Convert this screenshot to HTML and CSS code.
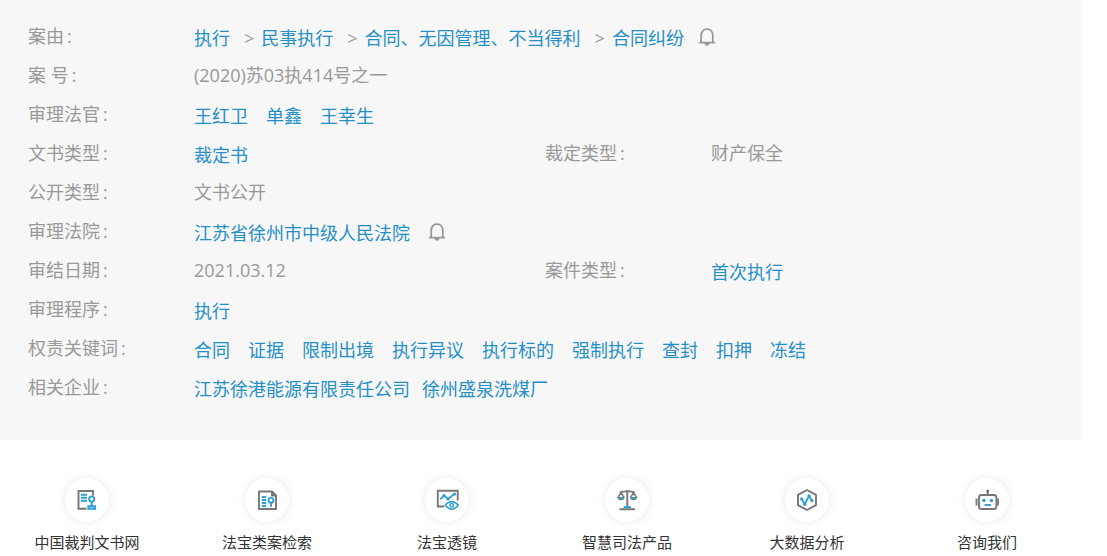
FILE: index.html
```html
<!DOCTYPE html>
<html lang="zh-CN">
<head>
<meta charset="utf-8">
<meta name="viewport" content="width=device-width, initial-scale=1">
<title>(2020)苏03执414号之一</title>
<link rel="stylesheet" href="styles.css">
</head>
<body>
<svg class="defs" aria-hidden="true">
  <symbol id="bell" viewBox="0 0 18 18">
    <path d="M3.200 14V7.600C3.200 3.700 5.600 1.200 9 1.200S14.800 3.700 14.800 7.600V14" fill="none" stroke="#999" stroke-width="1.800"/>
    <path d="M0.300 15.600L3 12.300L4.100 13.800H13.900L15 12.300L17.700 15.600H11.800Q11 17.800 9 17.800T6.200 15.600Z" fill="#999"/>
  </symbol>
</svg>
<main>
  <dl class="info">
    <div class="row"><div class="pair"><dt>案由<span class="colon">:</span></dt><dd class="crumbs"><a href="#">执行</a><span class="sep">&gt;</span><a href="#">民事执行</a><span class="sep">&gt;</span><a href="#">合同、无因管理、不当得利</a><span class="sep">&gt;</span><a href="#">合同纠纷</a><button class="bell" type="button" aria-label="订阅案由"><svg><use href="#bell"/></svg></button></dd></div></div>
    <div class="row"><div class="pair"><dt>案 号<span class="colon">:</span></dt><dd>(2020)苏03执414号之一</dd></div></div>
    <div class="row"><div class="pair"><dt>审理法官<span class="colon">:</span></dt><dd class="links"><a href="#">王红卫</a><a href="#">单鑫</a><a href="#">王幸生</a></dd></div></div>
    <div class="row"><div class="pair"><dt>文书类型<span class="colon">:</span></dt><dd class="links"><a href="#">裁定书</a></dd></div><div class="pair"><dt>裁定类型<span class="colon">:</span></dt><dd>财产保全</dd></div></div>
    <div class="row"><div class="pair"><dt>公开类型<span class="colon">:</span></dt><dd>文书公开</dd></div></div>
    <div class="row"><div class="pair"><dt>审理法院<span class="colon">:</span></dt><dd class="links"><a href="#">江苏省徐州市中级人民法院</a><button class="bell" type="button" aria-label="订阅法院"><svg><use href="#bell"/></svg></button></dd></div></div>
    <div class="row"><div class="pair"><dt>审结日期<span class="colon">:</span></dt><dd>2021.03.12</dd></div><div class="pair"><dt>案件类型<span class="colon">:</span></dt><dd class="links"><a href="#">首次执行</a></dd></div></div>
    <div class="row"><div class="pair"><dt>审理程序<span class="colon">:</span></dt><dd class="links"><a href="#">执行</a></dd></div></div>
    <div class="row"><div class="pair"><dt>权责关键词<span class="colon">:</span></dt><dd class="links"><a href="#">合同</a><a href="#">证据</a><a href="#">限制出境</a><a href="#">执行异议</a><a href="#">执行标的</a><a href="#">强制执行</a><a href="#">查封</a><a href="#">扣押</a><a href="#">冻结</a></dd></div></div>
    <div class="row"><div class="pair"><dt>相关企业<span class="colon">:</span></dt><dd class="links companies"><a href="#">江苏徐港能源有限责任公司</a><a href="#">徐州盛泉洗煤厂</a></dd></div></div>
  </dl>
</main>
<nav class="services" aria-label="服务">
  <a class="service" href="#"><span class="disc"><svg class="icon" viewBox="0 0 24 24">
    <path class="g" d="M11.500 20.700H3.500V3H18V7.500"/>
    <path class="b" d="M5.800 6.800H12M5.800 9.800H12M5.800 12.800H12"/>
    <circle class="b" cx="16.700" cy="11" r="2.600"/>
    <path class="b" d="M16.700 13.500V17.500M13.300 20.800V18.200H20.200V20.800Z"/>
  </svg></span><span>中国裁判文书网</span></a>
  <a class="service" href="#"><span class="disc"><svg class="icon" viewBox="0 0 24 24">
    <path class="g" d="M4 3.500H17L21 7.500V21H4Z"/>
    <path class="gf" d="M16 3L21.500 8.500H16Z"/>
    <path class="b" d="M6.800 9H11.200M6.800 12H11.200M6.800 15H11.200M6.800 18H11.200"/>
    <circle class="b" cx="16" cy="12.300" r="2.400"/>
    <path class="b" d="M16 14.500V18.800"/>
  </svg></span><span>法宝类案检索</span></a>
  <a class="service" href="#"><span class="disc"><svg class="icon" viewBox="0 0 24 24">
    <path class="g" d="M9 18.500H2.800V2.700H22.700V12.500"/>
    <path class="b" d="M5.300 11.300L9 7.500L13 11L20 5.500"/>
    <circle class="f" cx="9" cy="7.500" r="1.600"/><circle class="f" cx="13" cy="11" r="1.600"/><circle class="f" cx="19.500" cy="6" r="1.600"/>
    <path class="b e" d="M10 17.300Q16.700 9.500 23.400 17.300Q16.700 25 10 17.300Z"/>
    <circle class="b e" cx="16.700" cy="17.300" r="1.700"/>
  </svg></span><span>法宝透镜</span></a>
  <a class="service" href="#"><span class="disc"><svg class="icon" viewBox="0 0 24 24">
    <path class="g" d="M12.300 2V19M5 4.500Q9 3 12.300 3.500Q15.600 3 19.600 4.500M4.500 21.300H20"/>
    <path class="g e" d="M6 4.500L3 9.500A3.200 3.200 0 0 0 9 9.500ZM18.600 4.500L15.600 9.500A3.200 3.200 0 0 0 21.600 9.500Z"/>
    <path class="f" d="M3.800 9H8.200Q8.200 11.400 6 11.400T3.800 9ZM16.400 9H20.800Q20.800 11.400 18.600 11.400T16.400 9ZM8 20.300L9.500 18H15L16.500 20.300Z"/>
  </svg></span><span>智慧司法产品</span></a>
  <a class="service" href="#"><span class="disc"><svg class="icon" viewBox="0 0 24 24">
    <path class="g" d="M12 2L21 6.800V17.200L12 22L3 17.200V6.800Z"/>
    <path class="b" d="M6.500 11L9.700 16.200L14 8L17 12.500"/>
    <circle class="f" cx="6.700" cy="11" r="1.700"/><circle class="f" cx="9.700" cy="16.200" r="1.700"/><circle class="f" cx="14" cy="8" r="1.700"/><circle class="f" cx="17" cy="12.500" r="1.600"/>
  </svg></span><span>大数据分析</span></a>
  <a class="service" href="#"><span class="disc"><svg class="icon" viewBox="0 0 24 24">
    <rect class="g" x="4" y="7" width="17.400" height="14" rx="2.500"/>
    <path class="g" d="M12.700 3V7M1.500 10.500V17.500M23.200 10.500V17.500"/>
    <circle class="gf" cx="12.700" cy="3" r="1.500"/>
    <circle class="f" cx="8.900" cy="12.500" r="1.700"/><circle class="f" cx="16.500" cy="12.500" r="1.700"/>
    <path class="b" d="M9.500 17H16"/>
  </svg></span><span>咨询我们</span></a>
</nav>
</body>
</html>
```
FILE: styles.css
```css
* { box-sizing: border-box; }
body {
  margin: 0;
  background: #fff;
  color: #999;
  font-family: "Open Sans", "Noto Sans CJK SC", sans-serif;
  font-size: 18px;
  line-height: 26px;
}
a { color: #258fc8; text-decoration: none; }
a:hover { text-decoration: underline; }
.defs { display: none; }

.info {
  margin: 0 26px 0 0;
  padding: 16px 19px 34px 28px;
  background: #f7f7f7;
}
.row {
  display: grid;
  grid-template-columns: 1fr 1fr;
  min-height: 39px;
  align-items: center;
}
.row > .pair:only-child { grid-column: 1 / -1; }
.pair { display: grid; grid-template-columns: 166px 1fr; }
dd { margin: 0; }
.colon { margin-left: 3px; }
.crumbs, .links {
  display: flex;
  flex-wrap: wrap;
  align-items: center;
  padding-top: 2px;
  margin-bottom: -2px;
}
.links { column-gap: 18px; }
.companies { column-gap: 12px; }
.sep { margin: 0 7px 0 14px; }

.bell {
  display: flex;
  padding: 0 0 2px;
  border: 0;
  background: none;
  cursor: pointer;
}
.bell svg { width: 18px; height: 18px; }
.crumbs .bell { margin-left: 14px; }

.services {
  display: flex;
  justify-content: space-between;
  padding: 38px 66px 0 33px;
}
.service {
  display: flex;
  flex-direction: column;
  align-items: center;
  gap: 10px;
  width: 108px;
  color: #333;
  font-size: 15px;
  line-height: 20px;
  white-space: nowrap;
}
.disc {
  display: grid;
  place-items: center;
  width: 44px;
  height: 44px;
  border-radius: 50%;
  background: #fff;
  box-shadow: 0 0 10px rgba(0, 0, 0, 0.1);
}
.icon { width: 24px; height: 24px; fill: none; }
.g { stroke: #777; stroke-width: 1.9; }
.b { stroke: #2f9fd3; stroke-width: 1.9; }
.e { stroke-width: 1.5; }
.f { fill: #2f9fd3; }
.gf { fill: #777; }
```
